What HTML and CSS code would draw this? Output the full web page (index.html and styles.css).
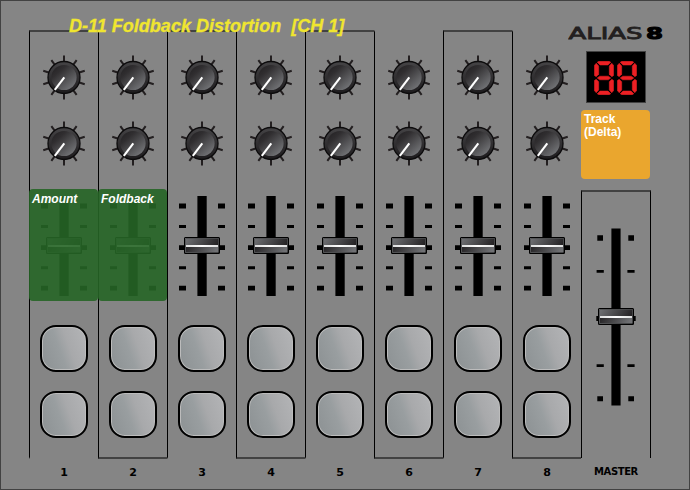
FILE: index.html
```html
<!DOCTYPE html>
<html lang="en">
<head>
<meta charset="utf-8">
<title>Alias 8</title>
<link rel="stylesheet" href="styles.css">
</head>
<body>
<svg class="defs" width="0" height="0" aria-hidden="true">
  <defs>
    <linearGradient id="rim" x1="0" y1="0" x2="0" y2="1"><stop offset="0" stop-color="#454446"/><stop offset="1" stop-color="#1d1b1d"/></linearGradient>
    <linearGradient id="cap" x1="0.1" y1="0.1" x2="0.8" y2="0.9"><stop offset="0" stop-color="#262426"/><stop offset="0.25" stop-color="#302e30"/><stop offset="1" stop-color="#707174"/></linearGradient>
    <linearGradient id="grip" x1="0" y1="0" x2="1" y2="0.25"><stop offset="0" stop-color="#707174"/><stop offset="1" stop-color="#252325"/></linearGradient>
    <linearGradient id="grip-low" x1="0" y1="0" x2="1" y2="0.1"><stop offset="0" stop-color="#252325"/><stop offset="1" stop-color="#707174"/></linearGradient>
    <linearGradient id="shine"><stop offset="0" stop-color="#dcdddd"/><stop offset="0.5" stop-color="#fff"/><stop offset="1" stop-color="#dcdddd"/></linearGradient>
  </defs>
  <symbol id="knob" viewBox="-22 -22.4 44 44.8">
    <g stroke="#231f20" stroke-width="2">
      <path d="M0-22V22"/><path d="M0-21.5V21.5" transform="rotate(36)"/><path d="M0-21.8V21.8" transform="rotate(72)"/><path d="M0-21.8V21.8" transform="rotate(108)"/><path d="M0-21.5V21.5" transform="rotate(144)"/>
    </g>
    <circle r="16" fill="url(#rim)" stroke="#0c0b0c" stroke-width="1.3"/>
    <circle r="12.6" fill="url(#cap)"/>
    <path d="M.3-.2L-9.2 12.4" stroke="#fff" stroke-width="2.1"/>
  </symbol>
  <symbol id="handle" viewBox="0 0 36 17">
    <rect x="0.5" y="0.5" width="35" height="16" rx="0.8" fill="#000"/>
    <rect x="0.7" y="0.7" width="34.6" height="15.6" rx="0.8" stroke="#000" stroke-width="1.4"/>
    <rect x="1.5" y="1.5" width="33" height="14" fill="url(#grip)" stroke="#77787b" stroke-width="0.5"/>
    <rect x="2" y="10" width="32" height="5" fill="url(#grip-low)"/>
    <rect x="2" y="8" width="32" height="2" fill="url(#shine)"/>
  </symbol>
  <symbol id="fader" viewBox="0 0 48 100">
    <path d="M19.4 0h9.3v100h-9.3z"/>
    <path d="M1 7.4h7v5H1zM40 7.4h7v5h-7zM1 29h7v3H1zM40 29h7v3h-7zM1 49.2h7v4.8H1zM40 49.2h7v4.8h-7zM1 70.3h7v3H1zM40 70.3h7v3h-7zM1 89.8h7v4.8H1zM40 89.8h7v4.8h-7z"/>
    <use href="#handle" x="6" y="41" width="36" height="17"/>
  </symbol>
  <symbol id="master" viewBox="0 0 40 178">
    <path d="M15.4 0.4h9.2v177h-9.2z"/>
    <path d="M1.3 7.3H7v5.4H1.3zM32.3 7.3H38v5.4h-5.7zM.6 42h7.2v2.8H.6zM31.4 42h7.2v2.8h-7.2zM.3 88h39.4v5H.3zM.6 136.2h7.2v2.8H.6zM31.4 136.2h7.2v2.8h-7.2zM1.3 168.3H7v5H1.3zM32.3 168.3H38v5h-5.7z"/>
    <use href="#handle" x="2" y="80" width="36" height="17"/>
  </symbol>
  <symbol id="digit" viewBox="0 0 20 34">
    <g fill="#ed2024" stroke="#ed2024" stroke-width="0.5">
      <path d="M3.2 1.2L5 .3H15L16.8 1.2 14 4H6z"/>
      <path d="M.4 4.4L2.2 2.2 4.7 5V13.3L2.2 15.8.4 14.5z"/>
      <path d="M19.6 4.4L17.8 2.2 15.3 5V13.3L17.8 15.8 19.6 14.5z"/>
      <path d="M3.2 17L5.6 15.2H14.4L16.8 17 14.4 18.8H5.6z"/>
      <path d="M.4 19.5L2.2 18.2 4.7 20.7V29L2.2 31.8.4 29.6z"/>
      <path d="M19.6 19.5L17.8 18.2 15.3 20.7V29L17.8 31.8 19.6 29.6z"/>
      <path d="M3.2 32.8L5 33.7H15L16.8 32.8 14 30H6z"/>
    </g>
  </symbol>
</svg>

<main class="panel">
  <section class="channels">
    <h1 class="title">D-11 Foldback Distortion&nbsp; [CH 1]</h1>
    <div class="strips">
      <div class="strip top">
        <svg class="knob"><use href="#knob"/></svg><svg class="knob"><use href="#knob"/></svg>
        <svg class="fader"><use href="#fader"/></svg>
        <span class="pad"></span><span class="pad"></span>
        <div class="assign">Amount</div>
      </div>
      <div class="strip bottom">
        <svg class="knob"><use href="#knob"/></svg><svg class="knob"><use href="#knob"/></svg>
        <svg class="fader"><use href="#fader"/></svg>
        <span class="pad"></span><span class="pad"></span>
        <div class="assign">Foldback</div>
      </div>
      <div class="strip top">
        <svg class="knob"><use href="#knob"/></svg><svg class="knob"><use href="#knob"/></svg>
        <svg class="fader"><use href="#fader"/></svg>
        <span class="pad"></span><span class="pad"></span>
      </div>
      <div class="strip bottom">
        <svg class="knob"><use href="#knob"/></svg><svg class="knob"><use href="#knob"/></svg>
        <svg class="fader"><use href="#fader"/></svg>
        <span class="pad"></span><span class="pad"></span>
      </div>
      <div class="strip top">
        <svg class="knob"><use href="#knob"/></svg><svg class="knob"><use href="#knob"/></svg>
        <svg class="fader"><use href="#fader"/></svg>
        <span class="pad"></span><span class="pad"></span>
      </div>
      <div class="strip bottom">
        <svg class="knob"><use href="#knob"/></svg><svg class="knob"><use href="#knob"/></svg>
        <svg class="fader"><use href="#fader"/></svg>
        <span class="pad"></span><span class="pad"></span>
      </div>
      <div class="strip top">
        <svg class="knob"><use href="#knob"/></svg><svg class="knob"><use href="#knob"/></svg>
        <svg class="fader"><use href="#fader"/></svg>
        <span class="pad"></span><span class="pad"></span>
      </div>
      <div class="strip bottom">
        <svg class="knob"><use href="#knob"/></svg><svg class="knob"><use href="#knob"/></svg>
        <svg class="fader"><use href="#fader"/></svg>
        <span class="pad"></span><span class="pad"></span>
      </div>
    </div>
    <div class="numbers">
      <span>1</span><span>2</span><span>3</span><span>4</span><span>5</span><span>6</span><span>7</span><span>8</span>
    </div>
  </section>

  <section class="side">
    <svg class="logo" viewBox="0 0 96 26">
      <text class="logo-name" x="0.5" y="19" textLength="74" lengthAdjust="spacingAndGlyphs">ALIAS</text>
      <text class="logo-num" x="78" y="19" textLength="17" lengthAdjust="spacingAndGlyphs">8</text>
    </svg>
    <div class="display" role="img" aria-label="88">
      <svg class="digit"><use href="#digit"/></svg><svg class="digit"><use href="#digit"/></svg>
    </div>
    <div class="track">Track<br>(Delta)</div>
    <div class="master-box"><svg class="master"><use href="#master"/></svg></div>
    <div class="numbers master-label"><span>MASTER</span></div>
  </section>
</main>
</body>
</html>
```
FILE: styles.css
```css
* { box-sizing: border-box; }
body { margin: 0; font-family: "Liberation Sans", Arial, sans-serif; }
svg { display: block; flex: none; }
.defs { position: absolute; }

.panel {
  display: flex;
  width: 690px;
  height: 490px;
  padding-left: 28px;
  background: #858585;
  border: 1px solid #424242;
  overflow: hidden;
}
.channels { width: 552px; flex: none; }
.title {
  position: relative;
  z-index: 1;
  height: 29px;
  margin: 0;
  padding: 15px 0 0 40px;
  color: #f0e62f;
  font-size: 18px;
  font-style: italic;
  line-height: 21px;
  white-space: nowrap;
  letter-spacing: 0.02px;
  -webkit-text-stroke: 0.3px #f0e62f;
}
.strips { display: flex; height: 429px; }
.strip {
  position: relative;
  display: flex;
  flex-direction: column;
  align-items: center;
  width: 69px;
  padding-top: 23px;
  border-left: 1px solid #000;
  border-top: 2px solid transparent;
  border-bottom: 2px solid transparent;
  background-clip: padding-box;
}
.strip.top { border-top-color: #424242; }
.strip.bottom { border-bottom-color: #424242; }
.knob { width: 44px; height: 45px; margin-bottom: 21px; }
.fader { width: 48px; height: 100px; margin: 9px 0 29px; }
.pad {
  width: 48px;
  height: 47px;
  flex: none;
  margin-bottom: 19px;
  border: 2px solid #000;
  border-radius: 16px;
  background: linear-gradient(70deg, #8f9496 10%, #999ea0 42%, #a8a9ab 60%, #b4b5b7 100%);
  box-shadow: inset 0 0 0 1px #bcbcbc;
}
.assign {
  position: absolute;
  left: -1px;
  top: 157px;
  width: 69px;
  height: 112px;
  padding: 3px;
  border-radius: 4px;
  background: rgba(38, 101, 38, 0.9);
  color: #fff;
  font-size: 12px;
  font-weight: bold;
  font-style: italic;
  line-height: 14px;
}
.numbers {
  display: flex;
  padding-top: 6px;
  color: #000;
  font: bold 11px/16px "DejaVu Sans", sans-serif;
}
.numbers span { width: 70px; margin-right: -1px; text-align: center; flex: none; }

.side { width: 70px; flex: none; }
.logo { width: 96px; height: 26px; margin: 19px 0 0 -13px; }
.logo-name { font: 16.5px "DejaVu Sans", sans-serif; fill: #231f20; stroke: #231f20; stroke-width: 0.8px; }
.logo-num { font: bold 16px "DejaVu Sans", sans-serif; fill: #000; stroke: #000; stroke-width: 1px; }
.display {
  display: flex;
  justify-content: center;
  gap: 3px;
  width: 60px;
  height: 52px;
  margin: 5px 0 7px 5px;
  padding-top: 9px;
  padding-right: 1px;
  border: 1px solid #424242;
  background: #000;
}
.digit { width: 20px; height: 34px; }
.track {
  width: 69px;
  height: 69px;
  padding: 3px;
  border-radius: 4px;
  background: #eaa62e;
  color: #fff;
  font-size: 12px;
  font-weight: bold;
  line-height: 13px;
}
.master-box {
  display: flex;
  justify-content: center;
  width: 70px;
  height: 268px;
  margin-top: 11px;
  padding-top: 36px;
  border: solid #000;
  border-width: 2px 1px 0;
  border-top-color: #424242;
}
.master { width: 40px; height: 178px; }
.master-label { padding-top: 6px; }
.master-label span { margin: 0; font-size: 10px; letter-spacing: -0.4px; }
```
